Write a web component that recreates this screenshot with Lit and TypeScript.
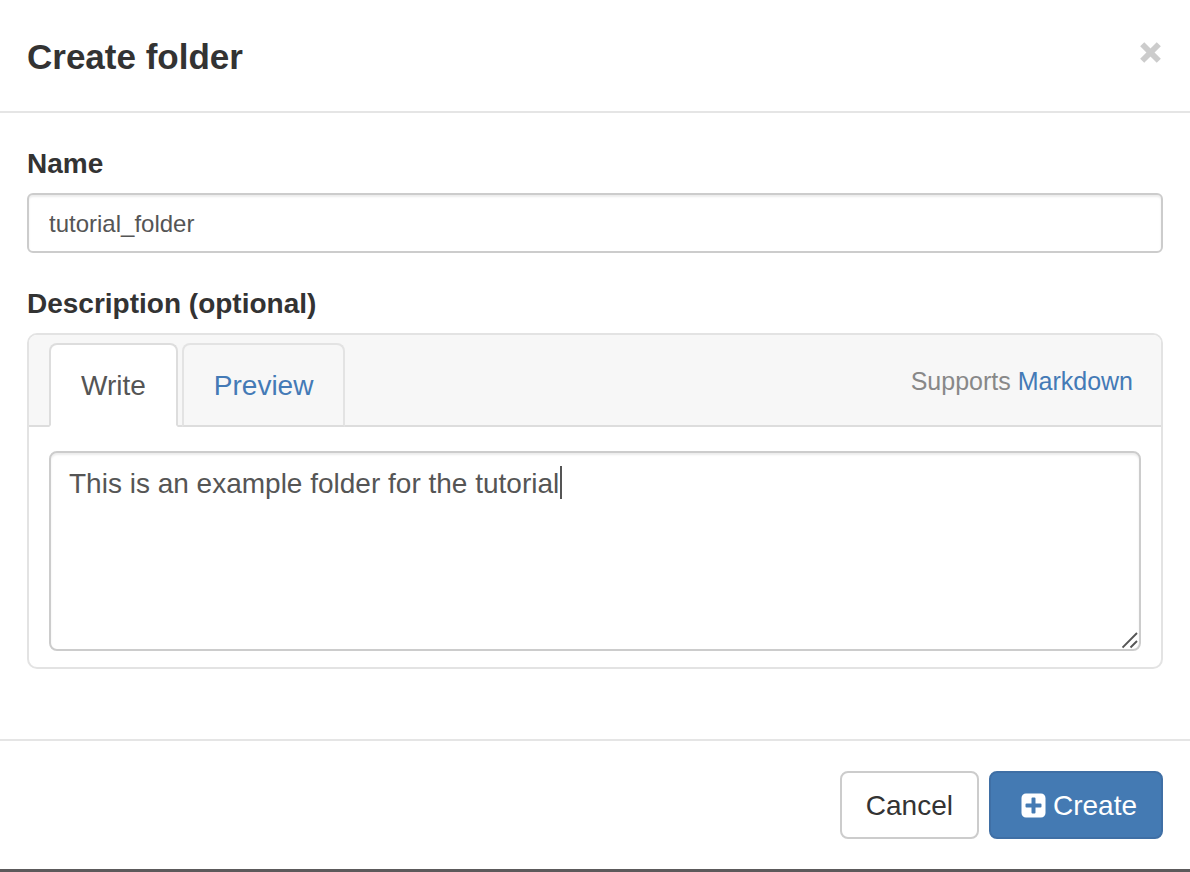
import { LitElement, html, css } from "lit";
import { customElement, state, query } from "lit/decorators.js";

@customElement("app-root")
export class AppRoot extends LitElement {
  @state() private folderName = "tutorial_folder";
  @state() private description = "This is an example folder for the tutorial";
  @state() private caretOffset = 0;
  @query(".area") private area!: HTMLTextAreaElement;

  static styles = css`
    :host {
      display: block;
      min-height: 100vh;
      background: #fff;
      color: #333;
      font-family: "Liberation Sans", Arial, sans-serif;
      font-size: 28px;
      line-height: 42px;
    }
    * {
      box-sizing: border-box;
    }
    .dialog {
      border-bottom: 3px solid #5c5a5b;
    }
    .header {
      display: flex;
      justify-content: space-between;
      align-items: flex-start;
      padding: 30px 27px 27px;
      border-bottom: 2px solid #e5e5e5;
    }
    .title {
      margin: 0;
      font-size: 35px;
      font-weight: 700;
      line-height: 54px;
    }
    .close {
      display: flex;
      margin: 0;
      padding: 12px 2px;
      border: 0;
      background: none;
      color: #ccc;
      cursor: pointer;
    }
    .body {
      padding: 30px 27px 70px;
    }
    .label {
      display: block;
      margin-bottom: 8px;
      font-weight: 700;
    }
    .text {
      display: block;
      width: 100%;
      height: 60px;
      margin-bottom: 30px;
      padding: 2px 20px 0;
      border: 2px solid #ccc;
      border-radius: 6px;
      background: #fff;
      box-shadow: inset 0 2px 2px rgba(0, 0, 0, 0.075);
      color: #555;
      font-family: inherit;
      font-size: 24px;
      outline: none;
    }
    .panel {
      border: 2px solid #e3e3e3;
      border-radius: 10px;
    }
    .tabs {
      display: flex;
      align-items: center;
      justify-content: space-between;
      padding: 8px 28px 0 20px;
      border-bottom: 2px solid #ddd;
      border-radius: 8px 8px 0 0;
      background: #f7f7f7;
    }
    .tablist {
      display: flex;
      gap: 4px;
      margin-bottom: -2px;
    }
    .tab {
      padding: 20px 30px 18px;
      border: 2px solid #e3e3e3;
      border-bottom-color: #ddd;
      border-radius: 8px 8px 0 0;
      background: none;
      color: #447ab6;
      font: inherit;
      cursor: pointer;
    }
    .tab.active {
      border-color: #ddd;
      border-bottom-color: #fff;
      background: #fff;
      color: #555;
    }
    .hint {
      margin-bottom: 6px;
      color: #888;
      font-size: 25px;
      line-height: 36px;
    }
    .link {
      color: #447ab6;
      text-decoration: none;
    }
    .editor {
      padding: 24px 20px 16px;
    }
    .field {
      position: relative;
    }
    .area {
      display: block;
      width: 100%;
      height: 200px;
      padding: 10px 18px;
      border: 2px solid #ccc;
      border-radius: 8px;
      background: #fff;
      box-shadow: inset 0 2px 2px rgba(0, 0, 0, 0.075);
      color: #555;
      font: inherit;
      outline: none;
      resize: vertical;
    }
    .area::-webkit-resizer {
      display: none;
    }
    .area:focus + .caret {
      display: none;
    }
    .caret {
      position: absolute;
      top: 15px;
      left: 21px;
      width: 2px;
      height: 33px;
      background: #555;
      pointer-events: none;
    }
    .grip {
      position: absolute;
      right: 2px;
      bottom: 2px;
      pointer-events: none;
    }
    .footer {
      display: flex;
      justify-content: flex-end;
      gap: 10px;
      padding: 30px 27px;
      border-top: 2px solid #e5e5e5;
    }
    .btn {
      display: flex;
      align-items: center;
      gap: 7px;
      height: 68px;
      padding: 0 24px;
      border: 2px solid #ccc;
      border-radius: 8px;
      background: #fff;
      color: #333;
      font: inherit;
      cursor: pointer;
    }
    .btn.primary {
      padding-left: 30px;
      border-color: #3f6fa5;
      background: #447ab3;
      color: #fff;
    }
    .caption {
      padding-top: 2px;
    }
  `;

  firstUpdated() {
    this.placeCaret();
  }

  private placeCaret() {
    const ctx = document.createElement("canvas").getContext("2d");
    if (!ctx) return;
    const look = getComputedStyle(this.area);
    ctx.font = `${look.fontSize} ${look.fontFamily}`;
    this.caretOffset = Math.round(ctx.measureText(this.description).width);
  }

  private onDescription(e: Event) {
    this.description = (e.target as HTMLTextAreaElement).value;
    this.placeCaret();
  }

  private onName(e: Event) {
    this.folderName = (e.target as HTMLInputElement).value;
  }

  render() {
    return html`
      <section class="dialog" role="dialog" aria-labelledby="title">
        <header class="header">
          <h1 class="title" id="title">Create folder</h1>
          <button class="close" type="button" aria-label="Close">
            <svg width="21" height="21" viewBox="0 0 21 21" aria-hidden="true">
              <path d="M2.200 2.200 18.800 18.800M18.800 2.200 2.200 18.800" stroke="currentColor" stroke-width="5.800" fill="none" />
            </svg>
          </button>
        </header>
        <div class="body">
          <label class="label" for="name">Name</label>
          <input class="text" id="name" type="text" .value=${this.folderName} @input=${this.onName} />
          <label class="label" for="description">Description (optional)</label>
          <div class="panel">
            <div class="tabs">
              <div class="tablist" role="tablist">
                <button class="tab active" type="button" role="tab" aria-selected="true">Write</button>
                <button class="tab" type="button" role="tab" aria-selected="false">Preview</button>
              </div>
              <div class="hint">Supports <a class="link" href="#markdown">Markdown</a></div>
            </div>
            <div class="editor">
              <div class="field">
                <textarea
                  class="area"
                  id="description"
                  spellcheck="false"
                  .value=${this.description}
                  @input=${this.onDescription}
                ></textarea>
                <span class="caret" style="margin-left: ${this.caretOffset}px"></span>
                <svg class="grip" width="17" height="17" viewBox="0 0 17 17" aria-hidden="true">
                  <path d="M0.500 15.500 15 1M8.500 15.500 15 9" stroke="#555" stroke-width="1.900" fill="none" />
                </svg>
              </div>
            </div>
          </div>
        </div>
        <footer class="footer">
          <button class="btn" type="button"><span class="caption">Cancel</span></button>
          <button class="btn primary" type="button">
            <svg width="25" height="25" viewBox="0 0 25 25" aria-hidden="true">
              <path
                fill="currentColor"
                fill-rule="evenodd"
                d="M5 0.500H20A4.500 4.500 0 0 1 24.500 5V20A4.500 4.500 0 0 1 20 24.500H5A4.500 4.500 0 0 1 0.500 20V5A4.500 4.500 0 0 1 5 0.500ZM11.500 4.500A1 1 0 0 0 10.500 5.500V10.500H5.500A1 1 0 0 0 4.500 11.500V13.500A1 1 0 0 0 5.500 14.500H10.500V19.500A1 1 0 0 0 11.500 20.500H13.500A1 1 0 0 0 14.500 19.500V14.500H19.500A1 1 0 0 0 20.500 13.500V11.500A1 1 0 0 0 19.500 10.500H14.500V5.500A1 1 0 0 0 13.500 4.500Z"
              />
            </svg>
            <span class="caption">Create</span>
          </button>
        </footer>
      </section>
    `;
  }
}
